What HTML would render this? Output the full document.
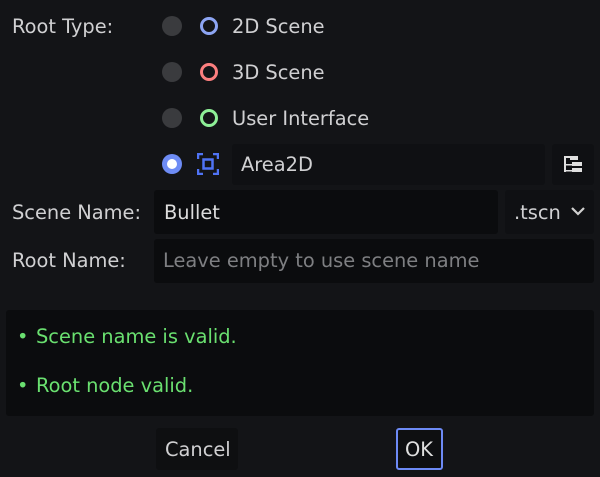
<!DOCTYPE html>
<html><head><style>
body{margin:0;width:600px;height:477px;background:#131417;font-family:"DejaVu Sans","Liberation Sans",sans-serif;font-size:19.4px;color:#d0d0d2;position:relative;overflow:hidden}
.a{position:absolute;white-space:nowrap}
.rad{position:absolute;width:20px;height:20px;border-radius:50%;background:#3a3b3e;left:162px}
.ring{position:absolute;width:12px;height:12px;border-radius:50%;border:3px solid;left:200px}
.box{position:absolute;background:#0b0c0e;border-radius:3px}
</style></head><body>
<div class="a" style="left:12px;top:15px">Root Type:</div>
<div class="rad" style="top:16px"></div><div class="ring" style="top:17px;border-color:#8da5f3"></div><div class="a" style="left:232px;top:15px">2D Scene</div>
<div class="rad" style="top:62px"></div><div class="ring" style="top:63px;border-color:#fc7f7f"></div><div class="a" style="left:232px;top:61px">3D Scene</div>
<div class="rad" style="top:108px"></div><div class="ring" style="top:109px;border-color:#8eef97"></div><div class="a" style="left:232px;top:107px">User Interface</div>
<div class="rad" style="top:154px;background:#6e8cf5"></div><div style="position:absolute;left:167px;top:159px;width:10px;height:10px;border-radius:50%;background:#fff"></div>
<svg class="a" style="left:197px;top:153px" width="22" height="22" viewBox="0 0 22 22" fill="none" stroke="#4f73f5" stroke-width="2.5"><path d="M1 6V1h5M16 1h5v5M21 16v5h-5M6 21H1v-5"/><rect x="6.5" y="6.5" width="9" height="9"/></svg>
<div class="box" style="left:232px;top:144px;width:313px;height:41px;background:#0f1013"></div>
<div class="a" style="left:241px;top:153px">Area2D</div>
<div class="box" style="left:552px;top:144px;width:42px;height:41px;background:#0f1013"></div>
<svg class="a" style="left:563px;top:154px" width="22" height="22" viewBox="0 0 22 22" fill="#e0e0e0"><rect x="1" y="2" width="9" height="2"/><rect x="1" y="2" width="2" height="16"/><rect x="7" y="2" width="8" height="4"/><rect x="3" y="10" width="6" height="1.5"/><rect x="9" y="8" width="10" height="4"/><rect x="3" y="16" width="6" height="1.5"/><rect x="9" y="14" width="10" height="4"/></svg>
<div class="a" style="left:12px;top:201px">Scene Name:</div>
<div class="box" style="left:154px;top:190px;width:344px;height:44px"></div>
<div class="a" style="left:164px;top:201px;color:#dcdcdc">Bullet</div>
<div class="box" style="left:505px;top:190px;width:89px;height:44px;background:#0f1013"></div>
<div class="a" style="left:514px;top:201px">.tscn</div>
<svg class="a" style="left:570px;top:205px" width="16" height="12" viewBox="0 0 16 12" fill="none" stroke="#d0d0d0" stroke-width="2.2"><path d="M2 3l6 6 6-6"/></svg>
<div class="a" style="left:12px;top:249px">Root Name:</div>
<div class="box" style="left:154px;top:239px;width:440px;height:44px"></div>
<div class="a" style="left:163px;top:249px;color:#7e7f82">Leave empty to use scene name</div>
<div class="box" style="left:6px;top:310px;width:588px;height:106px;background:#0b0c0e"></div>
<div class="a" style="left:17px;top:325px;color:#6ae070">•</div><div class="a" style="left:36px;top:325px;color:#6ae070">Scene name is valid.</div>
<div class="a" style="left:17px;top:374px;color:#6ae070">•</div><div class="a" style="left:36px;top:374px;color:#6ae070">Root node valid.</div>
<div class="box" style="left:156px;top:428px;width:82px;height:42px;background:#0e0f11"></div>
<div class="a" style="left:165px;top:438px">Cancel</div>
<div class="box" style="left:396px;top:428px;width:43px;height:38px;border:2px solid #6d8af5;background:#0e0f11"></div>
<div class="a" style="left:405px;top:438px;color:#e0e0e0">OK</div>
</body></html>
